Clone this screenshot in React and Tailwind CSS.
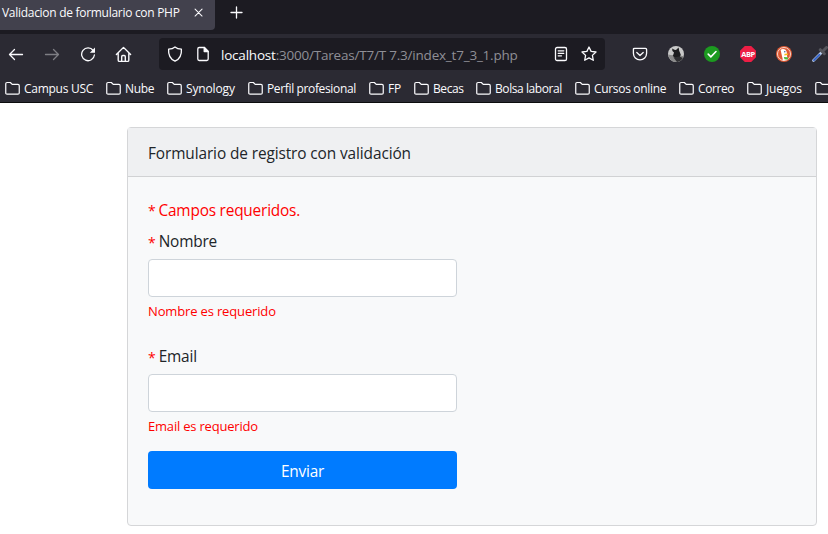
const bookmarks = [
  ['Campus USC', 'w-[101px]', 'tracking-[-0.28px]'],
  ['Nube', 'w-[61px]', 'tracking-[-0.3px]'],
  ['Synology', 'w-[81px]', 'tracking-[-0.15px]'],
  ['Perfil profesional', 'w-[121px]', 'tracking-[-0.36px]'],
  ['FP', 'w-[45px]', 'tracking-[-0.3px]'],
  ['Becas', 'w-[62px]', 'tracking-[-0.42px]'],
  ['Bolsa laboral', 'w-[99px]', 'tracking-[-0.42px]'],
  ['Cursos online', 'w-[104px]', 'tracking-[-0.32px]'],
  ['Correo', 'w-[68px]', 'tracking-[-0.42px]'],
  ['Juegos', 'w-[68px]', 'tracking-[-0.15px]'],
  ['', 'w-[40px]', ''],
];

function Icon({ children, className = 'size-4' }) {
  return (
    <svg viewBox="0 0 16 16" className={`shrink-0 ${className}`} fill="none" stroke="#fbfbfe" strokeWidth="1.3" strokeLinecap="round" strokeLinejoin="round">
      {children}
    </svg>
  );
}

function Field({ label, error, errorClass }) {
  return (
    <div className="w-[309px]">
      <div className="flex h-6 items-center gap-[3px] text-[15.4px] whitespace-nowrap">
        <span className="text-[14px] text-[#f00]">*</span>
        <span className="tracking-[-0.2px]">{label}</span>
      </div>
      <input className="mt-[5px] block h-[38px] w-full rounded-[4px] border border-[#ced4da] bg-white px-3 outline-none" />
      <div className={`mt-[4px] h-5 text-[13px] leading-5 whitespace-nowrap text-[#f00] ${errorClass}`}>{error}</div>
    </div>
  );
}

export default function App() {
  return (
    <div className="flex h-[534px] w-[828px] flex-col overflow-hidden bg-white font-['Open_Sans','Noto_Sans',sans-serif] text-[#212529]">
      <header className="h-[103px] shrink-0 overflow-hidden border-b border-[#0c0c0d] bg-[#2b2a33] text-[#fbfbfe]">
        <div className="flex h-[34px] items-start bg-[#1c1b22]">
          <div className="flex h-[30px] w-[215px] items-center rounded-br-[4px] bg-[#42414d] pb-[4px] pl-[2px]">
            <span className="w-[190px] text-[12px] leading-4 tracking-[-0.29px] whitespace-nowrap">Validacion de formulario con PHP</span>
            <Icon className="size-[14px]"><path d="M3.5 3.5l8 8M11.5 3.5l-8 8" strokeWidth="1.2" /></Icon>
          </div>
          <Icon className="mt-[5px] ml-[14px] size-4"><path d="M7.5 2v11M2 7.5h11" /></Icon>
        </div>
        <div className="flex h-[40px] items-center">
          <Icon className="ml-[8px] size-4"><path d="M14.5 8.5H1.5M6.5 3.5l-5 5 5 5" /></Icon>
          <Icon className="ml-[20px] size-4 opacity-40"><path d="M1.5 8.5h13M9.5 3.5l5 5-5 5" /></Icon>
          <Icon className="ml-[20px] size-4">
            <path d="M13.2 4.5A6.4 6.4 0 1 0 14.4 9" />
            <path d="M15 1.5v5.2H9.8z" fill="#fbfbfe" stroke="none" />
          </Icon>
          <Icon className="ml-[19px] size-[17px]">
            <path d="M1.3 8L8 1.3 14.7 8M3 6.8v6.5q0 1.2 1.2 1.2h7.6q1.2 0 1.2-1.2V6.8M6.3 14.3V10q0-1 1-1h1.4q1 0 1 1v4.3" />
          </Icon>
          <div className="ml-[27px] flex h-8 w-[446px] items-center rounded-[4px] bg-[#1c1b22] pl-[8px]">
            <Icon><path d="M8 .9C6.4 2.2 3.8 3 1.6 3.2 1.2 8.6 3.2 13 8 15.2c4.8-2.2 6.8-6.6 6.4-12C12.2 3 9.6 2.2 8 .9z" /></Icon>
            <Icon className="ml-[12px] size-4">
              <path d="M9.4 1.5H4.2Q2.8 1.5 2.8 2.9v10.2q0 1.4 1.4 1.4h7.6q1.4 0 1.4-1.4V5.4z" />
              <path d="M9.2 1.5v4h4z" fill="#fbfbfe" />
            </Icon>
            <span className="mt-[2px] ml-[10px] w-[332px] text-[13.5px] tracking-[-0.21px] whitespace-nowrap text-[#8f8f96]"><span className="text-[#fbfbfe]">localhost</span>:3000/Tareas/T7/T 7.3/index_t7_3_1.php</span>
            <Icon><rect x="2.5" y="1.5" width="11" height="13" rx="1.6" /><path d="M5.2 4.8h5.6M5.2 7.3h5.6M5.2 9.8h3.3" /></Icon>
            <Icon className="ml-[12px] size-4"><path d="M8 1l2.1 4.4 4.9.6-3.6 3.4.9 4.9L8 11.9l-4.3 2.4.9-4.9L1 6l4.9-.6z" /></Icon>
          </div>
          <Icon className="ml-[27px] size-4"><path d="M2.5 2.3h11q1.1 0 1.1 1.1v3.9a6.6 6.6 0 0 1-13.2 0V3.4q0-1.1 1.1-1.1zM4.8 6.5L8 9.5l3.2-3" /></Icon>
          <svg viewBox="0 0 16 16" className="ml-[20px] size-4 shrink-0">
            <circle cx="8" cy="8" r="8" fill="#c9c9c9" />
            <path d="M.2 8.5L4 9.2 8 8l4 1.5 3.8.8A8 8 0 0 1 8 16 8 8 0 0 1 .2 8.5z" fill="#8a8a8a" />
            <path d="M4.2 2.4L6.3 3.8 8 4l2.6-2.6.6 3.4 1.6 4-1.4 3-3.6.8-2.9-2.5L6 6.6 4.4 5z" fill="#1d1d1f" />
            <path d="M5.5 11.5l6-1 3.4 1.6A8 8 0 0 1 9 16z" fill="#303033" />
          </svg>
          <svg viewBox="0 0 16 16" className="ml-[20px] size-4 shrink-0">
            <circle cx="8" cy="8" r="8" fill="#1c9a20" />
            <path d="M4.2 8.1l2.7 2.7 5.1-5.3" fill="none" stroke="#fff" strokeWidth="1.6" strokeLinecap="round" />
          </svg>
          <div className="ml-[20px] flex size-4 shrink-0 items-center justify-center bg-[#ed1e45] text-[7.5px] leading-[10px] font-bold tracking-[-0.4px] [clip-path:polygon(30%_0,70%_0,100%_30%,100%_70%,70%_100%,30%_100%,0_70%,0_30%)]">ABP</div>
          <svg viewBox="0 0 16 16" className="ml-[20px] size-4 shrink-0">
            <circle cx="8" cy="8" r="8" fill="#de5833" />
            <circle cx="8" cy="8" r="6.5" fill="none" stroke="#f6d8cd" strokeWidth="1" />
            <path d="M4.6 4C6 2.2 10.5 2.7 10.8 6.4L11.4 13.6 7 14.4z" fill="#fff" />
            <path d="M8.5 7.7l3.8-.3-.5 1.7-3.5.4z" fill="#f8b817" />
            <path d="M7.8 11l3.9.3.5 2.3-3.7-.3z" fill="#4cba3c" />
            <circle cx="8.8" cy="5.7" r=".7" fill="#2d4f8e" />
          </svg>
          <svg viewBox="0 0 16 16" className="ml-[20px] size-4 shrink-0">
            <path d="M1.5 14.5L10 6" stroke="#b9cdec" strokeWidth="2.6" strokeLinecap="round" />
            <path d="M2 14.2L7.5 8.7" stroke="#315fc6" strokeWidth="1.8" strokeLinecap="round" />
            <path d="M8.3 3.7l4 4M10.8 5.2L14.5 1.5" stroke="#55555c" strokeWidth="3" strokeLinecap="round" />
          </svg>
        </div>
        <nav className="flex h-[28px] items-center pl-[5px]">
          {bookmarks.map(([name, width, tracking], i) => (
            <div key={i} className={`flex shrink-0 items-center gap-[4px] ${width}`}>
              <Icon className="size-[15px]"><path d="M.8 12.8V3Q.8 1.6 2.2 1.6h3.5l2 2h6.1q1.4 0 1.4 1.4v7.8q0 1.2-1.4 1.2H2.2Q.8 14 .8 12.8z" /></Icon>
              <span className={`pt-[2px] text-[12px] leading-4 whitespace-nowrap ${tracking}`}>{name}</span>
            </div>
          ))}
        </nav>
      </header>
      <main className="pt-[24px] pl-[127px]">
        <section className="h-[399px] w-[690px] rounded-[4px] border border-[#d5d6d8] bg-[#f8f9fa]">
          <div className="h-[49px] border-b border-[#d1d2d4] bg-[#eff0f2] px-5 pt-[14px] text-[15.4px] leading-6 tracking-[-0.1px]">Formulario de registro con validación</div>
          <form className="flex flex-col px-5 pt-[22px]">
            <p className="mb-[7px] flex h-6 gap-[3px] text-[15.4px] leading-6 tracking-[-0.2px] text-[#f00]"><span className="text-[14px]">*</span><span>Campos requeridos.</span></p>
            <Field label="Nombre" error="Nombre es requerido" errorClass="tracking-[-0.15px]" />
            <div className="h-[24px]" />
            <Field label="Email" error="Email es requerido" errorClass="tracking-[-0.2px]" />
            <button type="button" className="mt-[15px] h-[38px] w-[309px] rounded-[4px] bg-[#007bff] pt-[4px] text-[15.4px] tracking-[-0.2px] text-white">Enviar</button>
          </form>
        </section>
      </main>
    </div>
  );
}
